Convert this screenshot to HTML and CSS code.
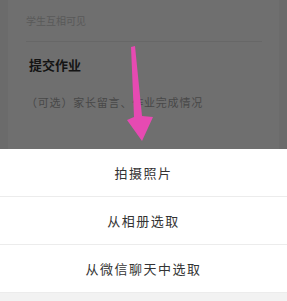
FILE: index.html
```html
<!DOCTYPE html>
<html>
<head>
	<meta charset="utf-8" />
	<title>提交作业</title>
	<link rel="stylesheet" href="styles.css">
</head>
<body>
	<div class="page">
		<div class="card">
			<p class="note">学生互相可见</p>
			<h2 class="title">提交作业</h2>
			<p class="hint">（可选）家长留言、作业完成情况</p>
		</div>
		<!-- 粉色箭头 -->
		<svg class="arrow" width="287" height="150" viewBox="0 0 287 150">
			<polygon points="131,47 135,46 142,116 153,117 142,141 127,120 134,117" fill="#e64ab2" />
		</svg>
	</div>

	<div class="sheet">
		<div class="item">拍摄照片</div>
		<div class="item">从相册选取</div>
		<div class="item">从微信聊天中选取</div>
		<div class="gap"></div>
	</div>
</body>
</html>
```

FILE: styles.css
```css
html, body {
	margin: 0;
	height: 100%;
}
body {
	display: flex;
	flex-direction: column;
	font-family: "Noto Sans CJK SC", "Noto Sans", sans-serif;
	background: #6b6b6b;
}
.page {
	position: relative;
	flex: 1;
	overflow: hidden;
}
.card {
	margin: 0 8px;
	height: 100%;
	background: #6f6f6f;
	padding: 0 17px 0 18px;
}
.note {
	margin: 0;
	padding-top: 14px;
	height: 27px;
	line-height: 14px;
	font-size: 10px;
	color: #595959;
	border-bottom: 1px solid #676767;
}
.title {
	margin: 0;
	padding: 14px 0 0 3px;
	font-size: 13px;
	line-height: 18px;
	font-weight: 700;
	color: #141414;
}
.hint {
	margin: 0;
	padding-top: 21px;
	font-size: 11px;
	line-height: 14px;
	letter-spacing: 0.8px;
	color: #484848;
}
.arrow {
	position: absolute;
	left: 0;
	top: 0;
}
.sheet {
	background: #fff;
}
.item {
	height: 47px;
	line-height: 47px;
	text-align: center;
	font-size: 13px;
	letter-spacing: 1.5px;
	color: #333;
	border-bottom: 1px solid #ececec;
}
.gap {
	height: 8px;
	background: #f2f2f2;
}
```
